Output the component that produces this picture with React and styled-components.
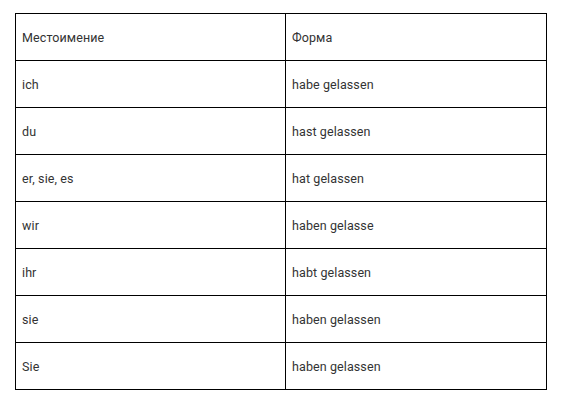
import React from 'react';
import styled, { createGlobalStyle } from 'styled-components';

const GlobalStyle = createGlobalStyle`
  body {
    margin: 0;
    background: #fff;
    font-family: Roboto, "Liberation Sans", Arial, sans-serif;
  }
`;

const Page = styled.div`
  padding: 13px 0 0 15px;
`;

const Table = styled.table`
  border-collapse: collapse;
  width: 532px;
  table-layout: fixed;
`;

const Row = styled.tr`
  height: 47px;
`;

const Cell = styled.td`
  border: 1px solid #000;
  padding: 0 6px;
  font-size: 12.5px;
  letter-spacing: 0.1px;
  color: #333;
  vertical-align: middle;
  width: ${(p) => p.$width || 'auto'};
`;

const rows = [
  ['Местоимение', 'Форма'],
  ['ich', 'habe gelassen'],
  ['du', 'hast gelassen'],
  ['er, sie, es', 'hat gelassen'],
  ['wir', 'haben gelasse'],
  ['ihr', 'habt gelassen'],
  ['sie', 'haben gelassen'],
  ['Sie', 'haben gelassen'],
];

const App = () => (
  <Page>
    <GlobalStyle />
    <Table>
      <tbody>
        {rows.map(([pronoun, form], i) => (
          <Row key={i}>
            <Cell $width="257px">{pronoun}</Cell>
            <Cell>{form}</Cell>
          </Row>
        ))}
      </tbody>
    </Table>
  </Page>
);

export default App;
